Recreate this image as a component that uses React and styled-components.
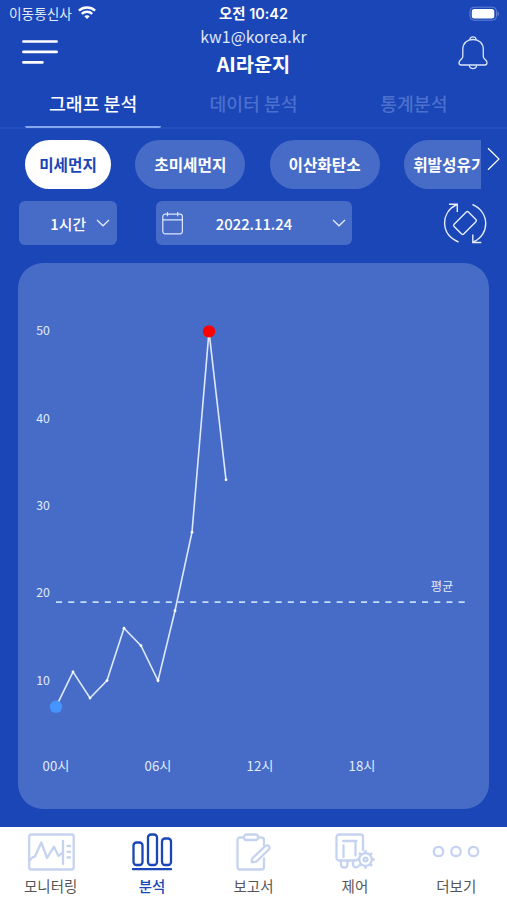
import styled, { createGlobalStyle } from 'styled-components';

const CHIPS = [
  { label: '미세먼지', width: 86, active: true },
  { label: '초미세먼지', width: 110 },
  { label: '이산화탄소', width: 110 },
  { label: '휘발성유기화합물', width: 134 },
];

const VALUES = [7, 11, 8, 10, 16, 14, 10, 18, 27, 50, 33];
const Y_TICKS = [50, 40, 30, 20, 10];
const X_TICKS = [0, 6, 12, 18];
const AVERAGE = 19;

const toX = (hour) => 38 + hour * 17;
const toY = (value) => 504.9 - value * 8.73;

function App() {
  return (
    <>
      <GlobalStyle />
      <Screen>
        <StatusBar>
          <Carrier>
            이동통신사
            <WifiIcon />
          </Carrier>
          <Clock>오전 10:42</Clock>
          <BatteryArea>
            <BatteryIcon />
          </BatteryArea>
        </StatusBar>

        <Header>
          <MenuButton>
            <MenuIcon />
          </MenuButton>
          <TitleBox>
            <Account>kw1@korea.kr</Account>
            <Title>AI라운지</Title>
          </TitleBox>
          <BellButton>
            <BellIcon />
          </BellButton>
        </Header>

        <Tabs>
          <Tab $active>그래프 분석</Tab>
          <Tab>데이터 분석</Tab>
          <Tab>통계분석</Tab>
        </Tabs>

        <ChipRow>
          <ChipList>
            {CHIPS.map((chip) => (
              <Chip key={chip.label} $active={chip.active} $width={chip.width}>
                {chip.label}
              </Chip>
            ))}
          </ChipList>
          <NextButton>
            <svg width="14" height="24" viewBox="0 0 14 24" fill="none" stroke="#fff" strokeWidth="1.2">
              <path d="M1 1.3 12 12 1 22.7" />
            </svg>
          </NextButton>
        </ChipRow>

        <FilterRow>
          <HourSelect>
            <span>1시간</span>
            <ChevronIcon />
          </HourSelect>
          <DateSelect>
            <CalendarIcon />
            <span>2022.11.24</span>
            <ChevronIcon />
          </DateSelect>
          <RotateButton>
            <RotateIcon />
          </RotateButton>
        </FilterRow>

        <ChartCard>
          <Chart />
        </ChartCard>

        <BottomNav>
          <NavItem>
            <MonitorIcon />
            모니터링
          </NavItem>
          <NavItem $active>
            <AnalysisIcon />
            분석
          </NavItem>
          <NavItem>
            <ReportIcon />
            보고서
          </NavItem>
          <NavItem>
            <ControlIcon />
            제어
          </NavItem>
          <NavItem>
            <MoreIcon />
            더보기
          </NavItem>
        </BottomNav>
      </Screen>
    </>
  );
}

function Chart() {
  const points = VALUES.map((value, hour) => `${toX(hour)},${toY(value)}`).join(' ');
  const max = Math.max(...VALUES);
  const min = Math.min(...VALUES);

  return (
    <ChartSvg viewBox="0 0 471 546">
      {Y_TICKS.map((tick) => (
        <AxisText key={tick} x="25" y={toY(tick) + 3.9} $size={12.3}>
          {tick}
        </AxisText>
      ))}
      {X_TICKS.map((tick) => (
        <AxisText key={tick} x={toX(tick)} y="508" $size={13.2}>
          {String(tick).padStart(2, '0')}시
        </AxisText>
      ))}

      <AxisText x="424" y="328" $size={12.3}>
        평균
      </AxisText>
      <line
        x1="38"
        x2="447"
        y1={toY(AVERAGE)}
        y2={toY(AVERAGE)}
        stroke="#c3dcf8"
        strokeWidth="1.7"
        strokeDasharray="6.1 6.1"
      />

      <polyline points={points} fill="none" stroke="#dce8fb" strokeWidth="1.6" />
      {VALUES.map((value, hour) => (
        <circle key={hour} cx={toX(hour)} cy={toY(value)} r="1.4" fill="#fff" />
      ))}
      <circle cx={toX(VALUES.indexOf(max))} cy={toY(max)} r="6.2" fill="#ff0000" />
      <circle cx={toX(VALUES.indexOf(min))} cy={toY(min)} r="6.2" fill="#4594ff" />
    </ChartSvg>
  );
}

function WifiIcon() {
  return (
    <svg width="18" height="13" viewBox="0 0 18 13" fill="none" stroke="#fff" strokeWidth="2.5">
      <path d="M.9 4.6C5.4.4 12.6.4 17.1 4.6" />
      <path d="M3.8 7.8c2.9-2.7 7.5-2.7 10.4 0" />
      <path d="M9 12.9 6.3 10.2c1.5-1.4 3.9-1.4 5.4 0z" fill="#fff" stroke="none" />
    </svg>
  );
}

function BatteryIcon() {
  return (
    <svg width="31" height="15" viewBox="0 0 31 15">
      <rect x="1" y="1.2" width="26.5" height="13" rx="4" fill="none" stroke="#6482d4" />
      <rect x="2.8" y="3" width="22.5" height="9.5" rx="2.5" fill="#fff" />
      <path d="M28.7 5.5V10c1.3-.5 1.3-4 0-4.5z" fill="#7f99dc" />
    </svg>
  );
}

function MenuIcon() {
  return (
    <svg width="36" height="26" viewBox="0 0 36 26" stroke="#fff" strokeWidth="2.7" strokeLinecap="round">
      <path d="M1.4 2.5h33.2M1.4 12.9h33.2M1.4 23.4h19" />
    </svg>
  );
}

function BellIcon() {
  return (
    <svg width="30" height="34" viewBox="0 0 30 34" fill="none" stroke="#dbe5fb" strokeWidth="1.3">
      <path d="M4.8 13.5C4.8 7 9.3 3.5 15 3.5S25.3 7 25.3 13.5v7.2c0 2.5 3.7 3.3 3.7 6 0 1.4-.8 2.3-2.2 2.3H3.2C1.8 29 1 28.1 1 26.7c0-2.7 3.8-3.5 3.8-6z" />
      <path d="M11.8 3.9c.3-4 6.1-4 6.4 0M11.300 29.300c.7 4.300 6.700 4.300 7.400 0" />
    </svg>
  );
}

function ChevronIcon() {
  return (
    <svg width="14" height="8" viewBox="0 0 14 8" fill="none" stroke="#e6eefd" strokeWidth="1.2">
      <path d="M1 1l6 5.8L13 1" />
    </svg>
  );
}

function CalendarIcon() {
  return (
    <svg width="22" height="23" viewBox="0 0 22 23" fill="none" stroke="#dbe5fb" strokeWidth="1.2">
      <rect x=".8" y="2.2" width="19.6" height="19.6" rx="2.5" />
      <path d="M.8 7.8h19.6M5.5 0v4.3M15.7 0v4.3" />
    </svg>
  );
}

function RotateIcon() {
  return (
    <svg width="44" height="42" viewBox="0 0 44 42" fill="none" stroke="#e6eefd" strokeWidth="1.4">
      <path d="M15.500 40C-3 32-2.500 10.500 13.800 2.500M6 2.200h8.300V10M29.500 2.500C47 10.500 47 32.500 30.300 40M29.800 32.500v8h8.500" />
      <rect x="11.900" y="14.200" width="20.200" height="13.600" rx="1.500" transform="rotate(-45 22 21)" />
    </svg>
  );
}

function MonitorIcon() {
  return (
    <NavIcon viewBox="0 0 48 38" width="48">
      <rect x="2.2" y="1.5" width="44.5" height="35" rx="2" />
      <path d="M2.5 27.5c3-3.5 3-4 5.5-4L14.3 9.5 20 25l7-11.3L31.5 23l3.500-3" />
      <path d="M36 8v23" />
      <path d="M40.5 13h2.5M40.5 18.8h2.5M40.5 24.5h2.5" />
    </NavIcon>
  );
}

function AnalysisIcon() {
  return (
    <NavIcon viewBox="0 0 42 38" width="42">
      <rect x="2.5" y="9.5" width="9" height="22.5" rx="3" />
      <rect x="17" y="1.5" width="9" height="30.5" rx="3" />
      <rect x="31" y="5.5" width="9" height="26.5" rx="3" />
      <path d="M2 36.2h38" />
    </NavIcon>
  );
}

function ReportIcon() {
  return (
    <NavIcon viewBox="0 0 36 38" width="36">
      <path d="M8.5 4.5H5A2.5 2.5 0 0 0 2.5 7v27A2.5 2.5 0 0 0 5 36.5h21.5A2.5 2.5 0 0 0 29 34v-8.5M29 12V7a2.5 2.5 0 0 0-2.5-2.500H23" />
      <rect x="9" y="1.5" width="14" height="5.5" rx="2.5" />
      <path d="M18 24.500 30.200 13.200c3-2.200 5.600.6 3.600 3.300L21.500 28.500l-4 .9c-1.200 0-1.200-1.900.5-4.900z" />
    </NavIcon>
  );
}

function ControlIcon() {
  return (
    <NavIcon viewBox="0 0 42 38" width="42">
      <path d="M22 27.5H5A2.5 2.5 0 0 1 2.5 25V4A2.5 2.5 0 0 1 5 1.500h21.500A2.500 2.500 0 0 1 29 4v13" />
      <path d="M9 8h13.500M9.500 12.500V24M21.500 8v14.500M7 28v3.500c0 4 6.500 4 6.500 0V28M19 28v3.500c0 2.800 3.200 3.700 5 2" />
      <circle cx="31.5" cy="26.5" r="6.3" />
      <circle cx="31.5" cy="26.5" r="1.9" />
      <path
        strokeWidth="2.6"
        strokeLinecap="butt"
        d="M31.500 20v-2.800M31.500 33v2.800M25 26.500h-2.800M38 26.500h2.800M27 22l-2-2M36 31l2 2M27 31l-2 2M36 22l2-2"
      />
    </NavIcon>
  );
}

function MoreIcon() {
  return (
    <NavIcon viewBox="0 0 48 38" width="48">
      <circle cx="6.5" cy="18.5" r="4.7" />
      <circle cx="24" cy="18.5" r="4.7" />
      <circle cx="41.5" cy="18.5" r="4.7" />
    </NavIcon>
  );
}

const GlobalStyle = createGlobalStyle`
  * {
    box-sizing: border-box;
  }

  body {
    margin: 0;
    font-family: 'Noto Sans CJK KR', sans-serif;
  }

  svg {
    display: block;
    flex-shrink: 0;
  }

  button {
    padding: 0;
    border: none;
    background: none;
    font: inherit;
    color: inherit;
    cursor: pointer;
  }
`;

const Screen = styled.div`
  display: flex;
  flex-direction: column;
  width: 507px;
  height: 900px;
  overflow: hidden;
  color: #fff;
  background-color: #1a46b8;
`;

const StatusBar = styled.div`
  display: grid;
  grid-template-columns: 1fr auto 1fr;
  align-items: center;
  height: 25px;
  padding: 0 7px;
`;

const Carrier = styled.div`
  display: flex;
  align-items: center;
  gap: 6px;
  padding-left: 2px;
  font-size: 13.7px;
  line-height: 20px;
  color: #e3eafa;
`;

const Clock = styled.div`
  padding-top: 2px;
  font-family: Inter, 'Noto Sans CJK KR', sans-serif;
  font-size: 14.4px;
  font-weight: 600;
  line-height: 20px;
`;

const BatteryArea = styled.div`
  display: flex;
  justify-content: flex-end;
  padding-top: 1px;
`;

const Header = styled.header`
  display: grid;
  grid-template-columns: 1fr auto 1fr;
  align-items: start;
  height: 55px;
  padding: 0 19px;
`;

const MenuButton = styled.button`
  justify-self: start;
  padding: 14px 0 0 3px;
`;

const BellButton = styled.button`
  justify-self: end;
  padding-top: 11px;
`;

const TitleBox = styled.div`
  text-align: center;
`;

const Account = styled.div`
  font-size: 15.9px;
  line-height: 24px;
  color: #dfe7fa;
`;

const Title = styled.h1`
  margin: 0;
  font-size: 19.7px;
  font-weight: 700;
  line-height: 29px;
`;

const Tabs = styled.nav`
  display: flex;
  height: 49px;
  padding: 0 13px;
  border-bottom: 2px solid #2450bd;
`;

const Tab = styled.button`
  display: flex;
  flex: 1;
  justify-content: center;
  height: 48px;
  margin: 0 12px;
  padding-top: 9px;
  border-bottom: 2.5px solid ${({ $active }) => ($active ? '#84a7ee' : 'transparent')};
  border-radius: 2px;
  font-size: 18.3px;
  font-weight: 500;
  line-height: 28px;
  white-space: nowrap;
  color: ${({ $active }) => ($active ? '#fff' : '#4c70cb')};
`;

const ChipRow = styled.div`
  display: flex;
  margin-top: 11px;
  padding-left: 25px;
`;

const ChipList = styled.div`
  display: flex;
  gap: 24.3px;
  width: 456px;
  overflow: hidden;
`;

const Chip = styled.button`
  flex: 0 0 ${({ $width }) => $width}px;
  height: 49px;
  border-radius: 25px;
  font-size: 15.7px;
  font-weight: 700;
  white-space: nowrap;
  color: ${({ $active }) => ($active ? '#1a46b8' : '#fff')};
  background-color: ${({ $active }) => ($active ? '#fff' : '#476cc8')};
`;

const NextButton = styled.button`
  display: flex;
  align-items: center;
  height: 38px;
  padding-left: 6px;
`;

const FilterRow = styled.div`
  display: flex;
  height: 44px;
  margin-top: 12px;
  padding: 0 20px 0 19px;
`;

const Select = styled.button`
  display: flex;
  align-items: center;
  height: 44px;
  border-radius: 6px;
  font-size: 14.8px;
  font-weight: 500;
  background-color: #476cc8;
`;

const HourSelect = styled(Select)`
  justify-content: flex-end;
  gap: 10px;
  width: 98px;
  padding-right: 7px;
`;

const DateSelect = styled(Select)`
  justify-content: space-between;
  width: 196px;
  margin-left: 39px;
  padding: 0 6px;

  span {
    margin-right: 8px;
  }
`;

const RotateButton = styled.button`
  margin-left: auto;
`;

const ChartCard = styled.section`
  height: 546px;
  margin: 18px 18px 0;
  border-radius: 25px;
  background-color: #476cc8;
`;

const ChartSvg = styled.svg`
  width: 471px;
  height: 546px;
`;

const AxisText = styled.text`
  font-size: ${({ $size }) => $size}px;
  text-anchor: middle;
  fill: #e1eafb;
`;

const BottomNav = styled.nav`
  display: grid;
  grid-template-columns: repeat(5, 1fr);
  height: 73px;
  margin-top: auto;
  background-color: #fff;
`;

const NavItem = styled.button`
  display: flex;
  flex-direction: column;
  align-items: center;
  gap: 4px;
  padding-top: 6px;
  font-size: 14.5px;
  font-weight: ${({ $active }) => ($active ? 500 : 400)};
  line-height: 21px;
  color: ${({ $active }) => ($active ? '#1a46b8' : '#555')};
  stroke: ${({ $active }) => ($active ? '#1a46b8' : '#c6d3f0')};
`;

const NavIcon = styled.svg`
  height: 38px;
  fill: none;
  stroke-width: 2.3;
  stroke-linecap: round;
  stroke-linejoin: round;
`;

export default App;
